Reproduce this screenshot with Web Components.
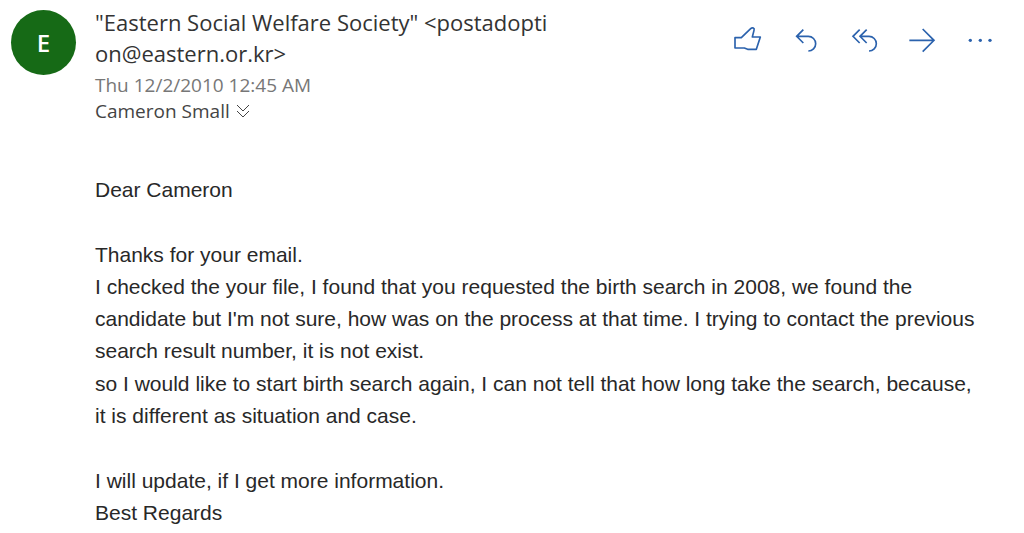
<!DOCTYPE html>
<html lang="en">
<head>
<meta charset="utf-8">
<title>Message</title>
<style>
body { margin: 0; background: #fff; color: #333; font-family: "Open Sans", "Noto Sans", sans-serif; }
</style>
</head>
<body>
<mail-message>
  <sender-avatar slot="avatar">E</sender-avatar>
  <message-header slot="header">
    <span slot="sender">"Eastern Social Welfare Society" &lt;postadopti<wbr>on@eastern.or.kr&gt;</span>
    <time slot="date" datetime="2010-12-02T00:45">Thu 12/2/2010 12:45 AM</time>
    <span slot="recipient">Cameron Small</span>
  </message-header>
  <message-actions slot="actions"></message-actions>
  <message-body slot="body">
    <p>Dear Cameron</p>
    <p>Thanks for your email.<br>I checked the your file, I found that you requested the birth search in 2008, we found the candidate but I'm not sure, how was on the process at that time. I trying to contact the previous search result number, it is not exist.</p>
    <p class="next">so I would like to start birth search again, I can not tell that how long take the search, because, it is different as situation and case.</p>
    <p class="last">I will update, if I get more information.<br>Best Regards</p>
  </message-body>
</mail-message>

<script>
const define = (name, html) => {
  const template = document.createElement('template');
  template.innerHTML = html;
  customElements.define(name, class extends HTMLElement {
    constructor() {
      super();
      this.attachShadow({ mode: 'open' }).append(template.content.cloneNode(true));
    }
  });
};

define('sender-avatar', `
<style>
:host { display: flex; align-items: center; justify-content: center; width: 65px; height: 65px; border-radius: 50%; background: #166a16; color: #fff; font-size: 24px; font-weight: 600; }
</style>
<slot></slot>`);

define('message-header', `
<style>
:host { display: block; }
.sender { max-width: 460px; font-size: 22px; line-height: 31px; color: #333; }
.date { font-size: 19px; line-height: 32px; color: #777; }
.to { display: flex; align-items: center; gap: 6px; font-size: 19px; line-height: 20px; color: #444; }
button { display: flex; padding: 0; border: 0; background: none; color: inherit; }
svg { width: 14px; height: 14px; fill: none; stroke: currentColor; stroke-width: 1; }
</style>
<div class="sender"><slot name="sender"></slot></div>
<div class="date"><slot name="date"></slot></div>
<div class="to"><slot name="recipient"></slot>
  <button type="button" aria-label="Show details"><svg viewBox="0 0 14 14"><path d="M1 1 7 7 13 1M1 7 7 13 13 7"/></svg></button>
</div>`);

define('action-button', `
<style>
:host { display: block; }
button { display: block; width: 58px; height: 40px; padding: 0; border: 0; background: none; color: #2b62ad; }
</style>
<button type="button"><slot></slot></button>`);

define('message-actions', `
<style>
:host { display: flex; }
svg { display: block; width: 58px; height: 40px; fill: none; stroke: currentColor; stroke-width: 5; }
.dots { fill: currentColor; stroke: none; }
</style>
<action-button><svg role="img" aria-label="Like" viewBox="0 0 174 120"><path stroke-linejoin="round" d="M48 53H67L95 26Q99 22 103 24Q107 26 105 31L100 51H124L112 88H86L76 84H48Z"/></svg></action-button>
<action-button><svg role="img" aria-label="Reply" viewBox="0 0 174 120"><path d="M79 29 59 49 79 69M59 49H94A22 22 0 0 1 94 93"/></svg></action-button>
<action-button><svg role="img" aria-label="Reply all" viewBox="0 0 174 120"><path d="M74 29 54 49 74 69M95 29 75 49 95 69M75 49H102A22 22 0 0 1 102 93"/></svg></action-button>
<action-button><svg role="img" aria-label="Forward" viewBox="0 0 174 120"><path d="M49 61H124M89 27 123 61 89 95"/></svg></action-button>
<action-button><svg class="dots" role="img" aria-label="More actions" viewBox="0 0 174 120"><circle cx="58" cy="61" r="5"/><circle cx="88" cy="61" r="5"/><circle cx="117" cy="61" r="5"/></svg></action-button>`);

define('message-body', `
<style>
:host { display: block; font: 21px/32px "Liberation Sans", Arial, sans-serif; color: #282828; }
::slotted(p) { margin: 0 0 33px; }
::slotted(.next) { margin-top: -32px; }
::slotted(.last) { margin-bottom: 0; }
</style>
<slot></slot>`);

define('mail-message', `
<style>
:host { display: grid; grid-template-columns: auto 1fr auto; column-gap: 19px; padding: 7px 15px 0 11px; }
.avatar { padding-top: 3px; }
.actions { padding-top: 13px; }
.body { grid-column: 2 / -1; padding: 53px 24px 0 0; }
</style>
<div class="avatar"><slot name="avatar"></slot></div>
<div><slot name="header"></slot></div>
<div class="actions"><slot name="actions"></slot></div>
<div class="body"><slot name="body"></slot></div>`);
</script>
</body>
</html>
